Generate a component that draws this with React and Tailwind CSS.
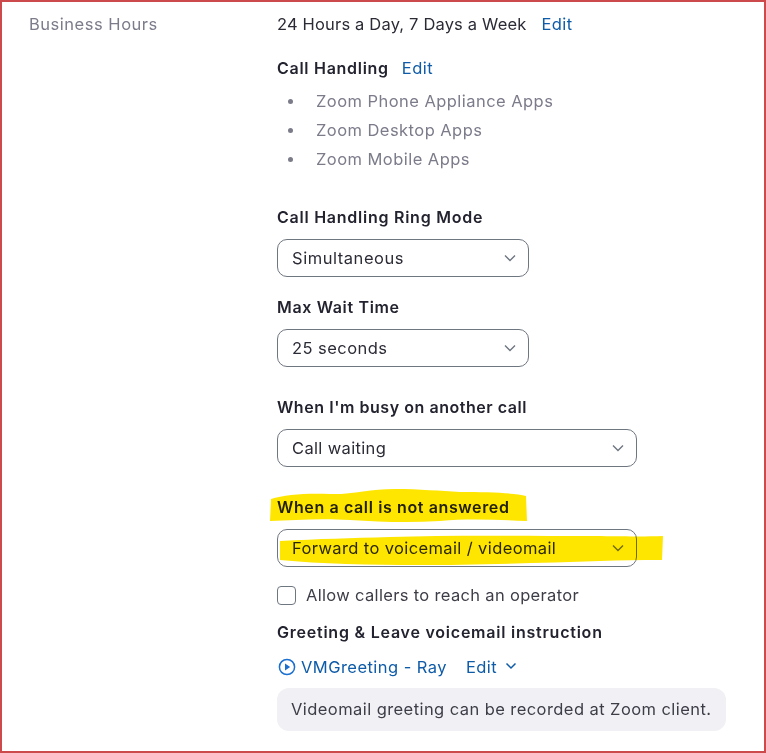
import React from 'react';

const Chevron = () => (
    <svg width="12" height="8" viewBox="0 0 12 8" fill="none" className="shrink-0">
        <path d="M1 1.5L6 6.5L11 1.5" stroke="#6e7680" strokeWidth="1.4" />
    </svg>
);

const Select = ({ value, width, tracking }) => (
    <div className={`${width} h-[38px] flex items-center justify-between pl-[14px] pr-[12px] border border-[#6e7680] rounded-[10px] text-[#2b2b36]`}>
        <span className={tracking}>{value}</span>
        <Chevron />
    </div>
);

const Label = ({ children, className }) => (
    <div className={`h-5 leading-5 font-semibold text-[#23232f] text-[16px] ${className}`}>{children}</div>
);

const App = () => {
    return (
        <div className="relative w-[766px] h-[753px] overflow-hidden bg-white border-2 border-[#cd4a4c] font-['Inter',sans-serif] text-[16.5px] tracking-[0.45px]">
            <div className="flex pt-[12px] pl-[27px]">
                <div className="w-[248px] h-5 leading-5 text-[#7b7b8a] tracking-[0.52px]">Business Hours</div>
                <div className="flex-1">
                    <div className="h-5 leading-5 flex text-[#2b2b36]">
                        <span className="tracking-[0.17px]">24 Hours a Day, 7 Days a Week</span>
                        <span className="ml-[15px] text-[#0e5ba8]">Edit</span>
                    </div>
                    <div className="mt-[24px] h-5 leading-5 flex">
                        <span className="font-semibold text-[#23232f] text-[16px] tracking-[0.72px]">Call Handling</span>
                        <span className="ml-[13px] text-[#0e5ba8]">Edit</span>
                    </div>
                    <ul className="mt-[9px] text-[#7b7b8a]">
                        {['Zoom Phone Appliance Apps', 'Zoom Desktop Apps', 'Zoom Mobile Apps'].map((item) => (
                            <li key={item} className="h-[29px] flex items-center">
                                <span className="ml-[11px] w-[5px] h-[5px] rounded-full bg-[#7b7b8a]" />
                                <span className="ml-[23px]">{item}</span>
                            </li>
                        ))}
                    </ul>
                    <Label className="mt-[33px] tracking-[0.75px]">Call Handling Ring Mode</Label>
                    <div className="mt-[12px]"><Select value="Simultaneous" width="w-[252px]" tracking="tracking-[0.55px]" /></div>
                    <Label className="mt-[20px] tracking-[0.65px]">Max Wait Time</Label>
                    <div className="mt-[12px]"><Select value="25 seconds" width="w-[252px]" /></div>
                    <Label className="mt-[30px] tracking-[0.55px]">When I'm busy on another call</Label>
                    <div className="mt-[12px]"><Select value="Call waiting" width="w-[360px]" tracking="tracking-[0.35px]" /></div>
                    <Label className="mt-[30px] tracking-[0.62px]">When a call is not answered</Label>
                    <div className="mt-[12px]"><Select value="Forward to voicemail / videomail" width="w-[360px]" tracking="tracking-[0.38px]" /></div>
                    <label className="mt-[18px] h-5 flex items-center text-[#3d3d48] tracking-[0.33px]">
                        <span className="w-[19px] h-[19px] border border-[#6e7680] rounded-[4px]" />
                        <span className="ml-[10px]">Allow callers to reach an operator</span>
                    </label>
                    <Label className="mt-[17px] tracking-[0.77px]">Greeting &amp; Leave voicemail instruction</Label>
                    <div className="mt-[15px] h-5 leading-5 flex items-center text-[#0e5ba8]">
                        <svg width="18" height="18" viewBox="0 0 18 18" fill="none" className="ml-[1px]">
                            <circle cx="9" cy="9" r="7.6" stroke="#1a6fd0" strokeWidth="1.5" />
                            <path d="M7 5.6L12.2 9L7 12.4Z" fill="#1a6fd0" />
                        </svg>
                        <span className="ml-[5px]">VMGreeting - Ray</span>
                        <span className="ml-[19px]">Edit</span>
                        <svg width="12" height="8" viewBox="0 0 12 8" fill="none" className="ml-[8px] mb-[3px]">
                            <path d="M1.5 1.5L6 6L10.5 1.5" stroke="#0e5ba8" strokeWidth="1.5" />
                        </svg>
                    </div>
                    <div className="mt-[11px] w-[449px] h-[43px] flex items-center pl-[14px] rounded-[12px] bg-[#f0f0f5] text-[#3d3d48] tracking-[0.43px]">
                        Videomail greeting can be recorded at Zoom client.
                    </div>
                </div>
            </div>

            {/* marker scribbles on top of the screenshot */}
            <svg className="absolute left-[-2px] top-[-2px] mix-blend-multiply pointer-events-none" width="766" height="753" fill="#fee600">
                <path d="M271 499C285 494 310 493 330 494C350 495 370 489 395 489C420 489 440 491 460 492C490 492 515 493 526 496L527 521C500 520 470 518 440 521C410 523 380 522 350 520C320 518 295 520 270 521Z" />
                <path d="M280 541C320 539 350 538 390 537C450 535 520 536 590 536C610 536 640 537 663 536L662 560C640 560 620 560 600 561C540 563 470 565 420 565C370 565 320 564 280 560Z" />
            </svg>
        </div>
    );
};

export default App;
